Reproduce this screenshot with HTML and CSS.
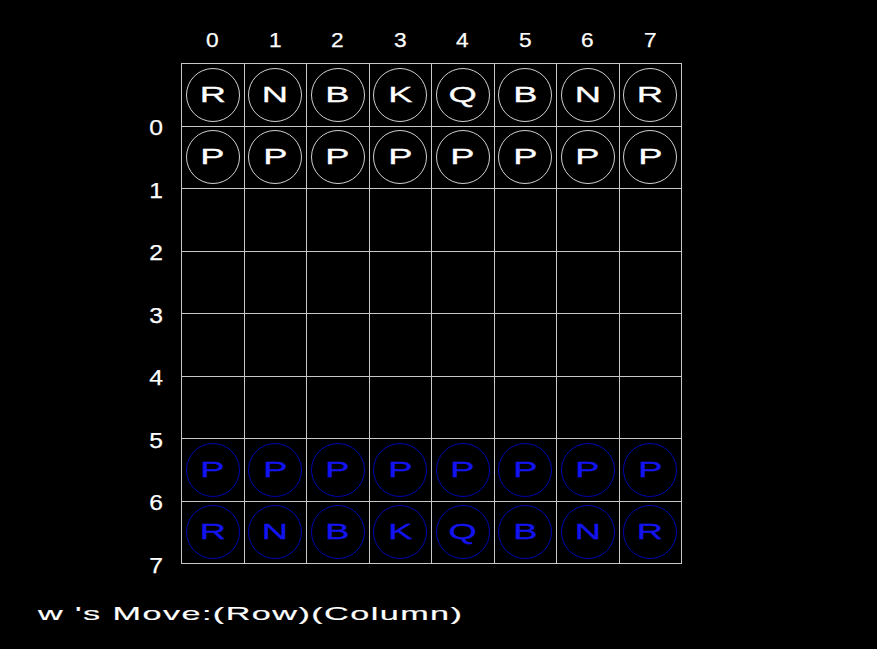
FILE: index.html
```html
<!DOCTYPE html>
<html>
<head>
<meta charset="utf-8">
<link rel="stylesheet" href="styles.css">
</head>
<body>
<div class="screen">
  <div class="cols">
    <span>0</span><span>1</span><span>2</span><span>3</span><span>4</span><span>5</span><span>6</span><span>7</span>
  </div>
  <div class="main">
    <div class="rows">
      <span>0</span><span>1</span><span>2</span><span>3</span><span>4</span><span>5</span><span>6</span><span>7</span>
    </div>
    <div class="board">
      <div class="cell"><div class="piece white"><span>R</span></div></div>
      <div class="cell"><div class="piece white"><span>N</span></div></div>
      <div class="cell"><div class="piece white"><span>B</span></div></div>
      <div class="cell"><div class="piece white"><span>K</span></div></div>
      <div class="cell"><div class="piece white"><span>Q</span></div></div>
      <div class="cell"><div class="piece white"><span>B</span></div></div>
      <div class="cell"><div class="piece white"><span>N</span></div></div>
      <div class="cell"><div class="piece white"><span>R</span></div></div>

      <div class="cell"><div class="piece white"><span>P</span></div></div>
      <div class="cell"><div class="piece white"><span>P</span></div></div>
      <div class="cell"><div class="piece white"><span>P</span></div></div>
      <div class="cell"><div class="piece white"><span>P</span></div></div>
      <div class="cell"><div class="piece white"><span>P</span></div></div>
      <div class="cell"><div class="piece white"><span>P</span></div></div>
      <div class="cell"><div class="piece white"><span>P</span></div></div>
      <div class="cell"><div class="piece white"><span>P</span></div></div>

      <div class="cell"></div><div class="cell"></div><div class="cell"></div><div class="cell"></div>
      <div class="cell"></div><div class="cell"></div><div class="cell"></div><div class="cell"></div>
      <div class="cell"></div><div class="cell"></div><div class="cell"></div><div class="cell"></div>
      <div class="cell"></div><div class="cell"></div><div class="cell"></div><div class="cell"></div>
      <div class="cell"></div><div class="cell"></div><div class="cell"></div><div class="cell"></div>
      <div class="cell"></div><div class="cell"></div><div class="cell"></div><div class="cell"></div>
      <div class="cell"></div><div class="cell"></div><div class="cell"></div><div class="cell"></div>
      <div class="cell"></div><div class="cell"></div><div class="cell"></div><div class="cell"></div>

      <div class="cell"><div class="piece blue"><span>P</span></div></div>
      <div class="cell"><div class="piece blue"><span>P</span></div></div>
      <div class="cell"><div class="piece blue"><span>P</span></div></div>
      <div class="cell"><div class="piece blue"><span>P</span></div></div>
      <div class="cell"><div class="piece blue"><span>P</span></div></div>
      <div class="cell"><div class="piece blue"><span>P</span></div></div>
      <div class="cell"><div class="piece blue"><span>P</span></div></div>
      <div class="cell"><div class="piece blue"><span>P</span></div></div>

      <div class="cell"><div class="piece blue"><span>R</span></div></div>
      <div class="cell"><div class="piece blue"><span>N</span></div></div>
      <div class="cell"><div class="piece blue"><span>B</span></div></div>
      <div class="cell"><div class="piece blue"><span>K</span></div></div>
      <div class="cell"><div class="piece blue"><span>Q</span></div></div>
      <div class="cell"><div class="piece blue"><span>B</span></div></div>
      <div class="cell"><div class="piece blue"><span>N</span></div></div>
      <div class="cell"><div class="piece blue"><span>R</span></div></div>
    </div>
  </div>
  <div class="prompt"><span>w 's Move:(Row)(Column)</span></div>
</div>
</body>
</html>
```

FILE: styles.css
```css
html, body {
  margin: 0;
  padding: 0;
  background: #000;
}

.screen {
  width: 877px;
  height: 649px;
  box-sizing: border-box;
  padding-top: 28px;
  background: #000;
  color: #fff;
  font-family: "Liberation Sans", Arial, sans-serif;
  overflow: hidden;
}

.cols {
  display: grid;
  grid-template-columns: repeat(8, 62.5px);
  margin-left: 181px;
  height: 24px;
  line-height: 24px;
  font-size: 21px;
  text-align: center;
}

.cols span {
  transform: scaleX(1.08);
  -webkit-text-stroke: 0.25px currentColor;
}

.main {
  display: flex;
  align-items: flex-start;
  height: 501px;
  margin-top: 11px;
  margin-left: 131px;
}

.rows {
  width: 50px;
  display: grid;
  grid-template-rows: repeat(8, 62.5px);
  padding-top: 33.75px;
  box-sizing: border-box;
  font-size: 22px;
}

.rows span {
  display: flex;
  align-items: center;
  justify-content: center;
  transform: scaleX(1.12);
  -webkit-text-stroke: 0.25px currentColor;
}

.board {
  display: grid;
  grid-template-columns: repeat(8, 62.5px);
  grid-template-rows: repeat(8, 62.5px);
  border-left: 1px solid #c8c8c8;
  border-top: 1px solid #c8c8c8;
}

.cell {
  box-sizing: border-box;
  border-right: 1px solid #c8c8c8;
  border-bottom: 1px solid #c8c8c8;
  display: flex;
  align-items: center;
  justify-content: center;
}

.piece {
  width: 54px;
  height: 54px;
  box-sizing: border-box;
  border-radius: 50%;
  display: flex;
  align-items: center;
  justify-content: center;
  font-size: 22px;
  line-height: 22px;
}

.piece span {
  display: block;
  transform: scaleX(1.65);
  -webkit-text-stroke: 0.3px currentColor;
}

.piece.white {
  border: 1px solid #d0d0d0;
  color: #fff;
}

.piece.blue {
  border: 1px solid #0000b0;
  color: #1414f0;
}

.prompt {
  margin-top: 39px;
  margin-left: 38px;
  font-size: 19px;
  line-height: 22px;
}

.prompt span {
  display: inline-block;
  transform: scaleX(1.8);
  transform-origin: left center;
  letter-spacing: 0.8px;
  white-space: pre;
  -webkit-text-stroke: 0.15px currentColor;
}
```
